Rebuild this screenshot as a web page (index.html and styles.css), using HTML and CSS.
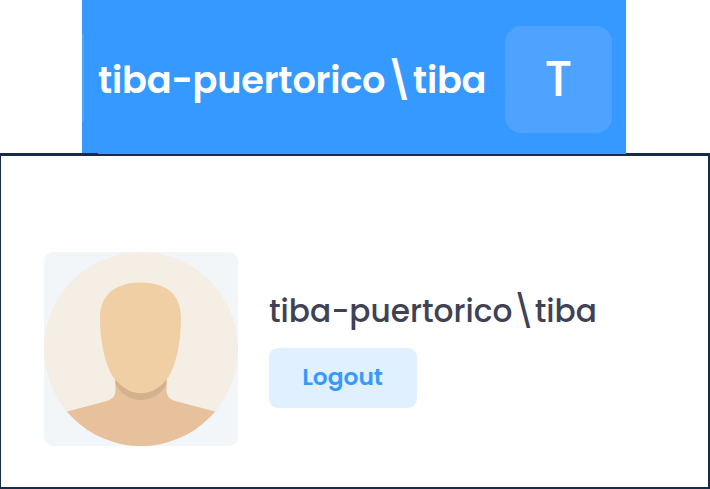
FILE: index.html
```html
<!DOCTYPE html>
<html lang="en">
<head>
<meta charset="utf-8">
<title>User profile</title>
<link rel="stylesheet" href="styles.css">
</head>
<body>
<header class="topbar">
  <div class="topbar-name">tiba-puertorico\tiba</div>
  <div class="initial">T</div>
</header>
<main class="panel">
  <svg class="avatar" viewBox="0 0 194 194" role="img" aria-label="Avatar">
    <defs><clipPath id="disc"><circle cx="97" cy="97" r="97"/></clipPath></defs>
    <circle cx="97" cy="97" r="97" fill="#f5eee4"/>
    <g clip-path="url(#disc)">
      <path fill="#e6c19c" d="M71.500 122H122.500V138C122.500 144 126 147.500 131 149L171 159.500L194 166V194H0V166L23 159.500L63 149C68 147.500 71.500 144 71.500 138Z"/>
      <path fill="#d4b08c" d="M71.500 122H122.500V132C112 153.500 82 153.500 71.500 132Z"/>
    </g>
    <path fill="#f1cfa5" d="M97 30.500C122 30.500 137 42 137 66C137 93 130.500 121 120.500 130C106 145 88 145 73.500 130C63 121 56 93 56 66C56 42 72 30.500 97 30.500Z"/>
  </svg>
  <section class="details">
    <div class="profile-name">tiba-puertorico\tiba</div>
    <button class="logout" type="button">Logout</button>
  </section>
</main>
</body>
</html>
```
FILE: styles.css
```css
* { box-sizing: border-box; }
body {
  margin: 0;
  width: 710px;
  height: 489px;
  background: #fff;
  font-family: Poppins, "Liberation Sans", sans-serif;
  overflow: hidden;
}
.topbar {
  position: relative;
  z-index: 1;
  display: flex;
  align-items: center;
  justify-content: space-between;
  width: 544px;
  height: 154px;
  margin-left: 82px;
  padding: 5px 14px 0 16px;
  background: linear-gradient(#4da3ff, #4da3ff) 0 34px / 2px 88px no-repeat #3699ff;
  clip-path: polygon(0 0, 100% 0, 100% 100%, 16px 100%, 16px 153px, 0 153px);
  color: #fff;
}
.topbar-name { font-size: 36.7px; line-height: 46px; font-weight: 600; letter-spacing: -0.2px; white-space: nowrap; }
.initial {
  display: flex;
  align-items: center;
  justify-content: center;
  width: 107px;
  height: 107px;
  border-radius: 16px;
  background: #4da3ff;
  font-size: 49px;
  font-weight: 500;
}
.panel {
  display: flex;
  align-items: flex-start;
  height: 336px;
  margin-top: -1px;
  padding: 96px 0 0 42.5px;
  border: solid #172b4d;
  border-width: 3px 2px 2px 1px;
}
.avatar {
  width: 194px;
  height: 194px;
  border-radius: 9px;
  background: #f2f6f9;
}
.details { margin: 36px 0 0 31.5px; }
.profile-name { font-size: 31.2px; line-height: 46px; font-weight: 500; color: #3f4254; white-space: nowrap; }
.logout {
  display: block;
  width: 148px;
  height: 60px;
  margin-top: 14px;
  padding: 0 1px 2px 0;
  border: 0;
  border-radius: 9px;
  background: #e1f0ff;
  color: #3699ff;
  font: 600 23.3px/58px Poppins, "Liberation Sans", sans-serif;
}
```
